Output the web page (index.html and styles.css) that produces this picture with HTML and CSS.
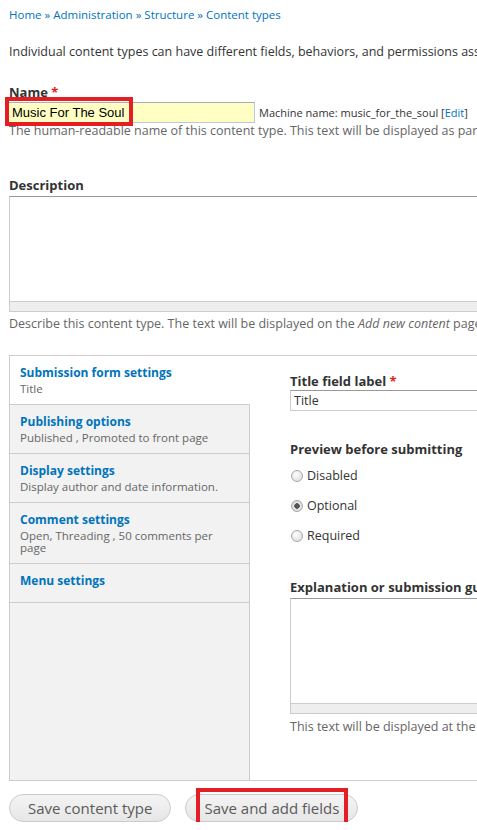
FILE: index.html
```html
<!DOCTYPE html>
<html lang="en">
<head>
  <meta charset="UTF-8" />
  <title>Content types</title>
  <link rel="stylesheet" href="styles.css">
</head>
<body>
  <div class="page">
    <div class="breadcrumb">
      <a href="#">Home</a> » <a href="#">Administration</a> » <a href="#">Structure</a> » <a href="#">Content types</a>
    </div>

    <p class="intro">Individual content types can have different fields, behaviors, and permissions assigned to them.</p>

    <div class="form-item name-item">
      <label for="name">Name <span class="req">*</span></label>
      <div class="name-row">
        <div class="mark-wrap">
          <input type="text" id="name" class="name-input" value="Music For The Soul" />
          <span class="mark mark-name"></span>
        </div>
        <span class="machine">Machine name: music_for_the_soul [<a href="#">Edit</a>]</span>
      </div>
      <div class="desc">The human-readable name of this content type. This text will be displayed as part of the list on the <em>Add new content</em> page.</div>
    </div>

    <div class="form-item descr-item">
      <label for="description">Description</label>
      <div class="textarea-wrap">
        <textarea id="description" class="big-text"></textarea>
        <div class="grip"></div>
      </div>
      <div class="desc">Describe this content type. The text will be displayed on the <em>Add new content</em> page.</div>
    </div>

    <div class="vertical-tabs">
      <ul class="tab-list">
        <li class="tab selected">
          <a href="#">Submission form settings</a>
          <span class="summary">Title</span>
        </li>
        <li class="tab">
          <a href="#">Publishing options</a>
          <span class="summary">Published , Promoted to front page</span>
        </li>
        <li class="tab">
          <a href="#">Display settings</a>
          <span class="summary">Display author and date information.</span>
        </li>
        <li class="tab">
          <a href="#">Comment settings</a>
          <span class="summary">Open, Threading , 50 comments per page</span>
        </li>
        <li class="tab menu-tab">
          <a href="#">Menu settings</a>
        </li>
      </ul>

      <div class="tab-pane">
        <div class="form-item">
          <label for="title_label">Title field label <span class="req">*</span></label>
          <input type="text" id="title_label" class="title-input" value="Title" />
        </div>

        <div class="form-item preview-item">
          <label>Preview before submitting</label>
          <div class="radios">
            <label class="radio"><input type="radio" name="preview" /> Disabled</label>
            <label class="radio"><input type="radio" name="preview" checked /> Optional</label>
            <label class="radio"><input type="radio" name="preview" /> Required</label>
          </div>
        </div>

        <div class="form-item help-item">
          <label for="help">Explanation or submission guidelines</label>
          <div class="textarea-wrap">
            <textarea id="help" class="help-text"></textarea>
            <div class="grip"></div>
          </div>
          <div class="desc">This text will be displayed at the top of the page when creating or editing content of this type.</div>
        </div>
      </div>
    </div>

    <div class="actions">
      <button type="button" class="btn">Save content type</button>
      <div class="mark-wrap">
        <button type="button" class="btn">Save and add fields</button>
        <span class="mark mark-btn"></span>
      </div>
    </div>
  </div>
</body>
</html>
```

FILE: styles.css
```css
html, body {
  overflow: hidden;
}

body {
  margin: 0;
  background: #fff;
  font-family: "Open Sans", Arial, sans-serif;
  font-size: 12.5px;
  color: #333;
}

.page {
  width: 860px;
  padding: 8px 0 0 9px;
}

a {
  color: #0074bd;
  text-decoration: none;
}

.breadcrumb {
  font-size: 11.5px;
  line-height: 14px;
  color: #0074bd;
}

.intro {
  margin: 22px 0 0;
  line-height: 16px;
  white-space: nowrap;
}

.form-item label {
  display: block;
  font-weight: bold;
  font-size: 13px;
  line-height: 16px;
  color: #333;
}

.req {
  color: #e3211b;
}

.desc {
  color: #666;
  line-height: 16px;
  white-space: nowrap;
}

/* name */
.name-item {
  margin-top: 24px;
}

.name-row {
  display: flex;
  align-items: center;
  margin-top: 2px;
}

.mark-wrap {
  position: relative;
}

.name-input {
  display: block;
  box-sizing: border-box;
  width: 247px;
  height: 21px;
  margin: 0 0 0 -1px;
  padding: 0 3px;
  border: 1px solid #b8c8dc;
  border-top-color: #aab;
  background: #ffffc4;
  font-family: "Liberation Sans", Arial, sans-serif;
  font-size: 13px;
  color: #000;
}

.machine {
  margin-left: 4px;
  font-size: 11px;
  color: #333;
}

.mark {
  position: absolute;
  border: 4px solid #e31e25;
  pointer-events: none;
}

.mark-name {
  left: -4px;
  top: -5px;
  width: 120px;
  height: 21px;
}

/* textareas */
.descr-item {
  margin-top: 38px;
}

.textarea-wrap {
  margin-top: 3px;
}

.textarea-wrap textarea {
  display: block;
  box-sizing: border-box;
  width: 780px;
  margin: 0;
  border: 1px solid #ccc;
  border-top-color: #999;
  border-bottom: 0;
  resize: none;
}

.big-text {
  height: 105px;
}

.grip {
  width: 780px;
  height: 11px;
  box-sizing: border-box;
  background: #eee;
  border: 1px solid #ccc;
}

.descr-item .desc {
  margin-top: 4px;
}

/* vertical tabs */
.vertical-tabs {
  display: flex;
  margin-top: 23px;
  border: 1px solid #ccc;
  border-right: 0;
  width: 770px;
}

.tab-list {
  list-style: none;
  margin: 0;
  padding: 0;
  width: 239px;
  flex-shrink: 0;
  background: #f2f2f2;
  border-right: 1px solid #ccc;
  min-height: 424px;
}

.tab {
  padding: 9px 10px 9px;
  border-bottom: 1px solid #ccc;
  line-height: 16px;
}

.tab.selected {
  background: #fff;
  margin-right: -1px;
  padding-right: 11px;
}

.tab a {
  display: block;
  font-weight: bold;
  font-size: 12px;
}

.summary {
  display: block;
  margin-top: 2px;
  font-size: 11.5px;
  color: #666;
  line-height: 12px;
}

.menu-tab {
  padding-bottom: 13px;
}

.tab-pane {
  flex: 1;
  padding: 17px 0 0 40px;
}

.title-input {
  display: block;
  box-sizing: border-box;
  width: 500px;
  height: 21px;
  margin: 1px 0 0;
  padding: 0 3px;
  border: 1px solid #ccc;
  border-top-color: #999;
  font-family: "Open Sans", Arial, sans-serif;
  font-size: 12.5px;
  color: #333;
}

.preview-item {
  margin-top: 30px;
}

.radios {
  margin-top: 4px;
}

.form-item .radio {
  display: flex;
  align-items: center;
  gap: 4px;
  font-weight: normal;
  font-size: 12.5px;
  height: 30px;
  color: #333;
}

.radio input {
  appearance: none;
  width: 12px;
  height: 12px;
  margin: 0 0 0 1px;
  border: 1px solid #a7a7a7;
  border-radius: 50%;
  background: radial-gradient(circle at 40% 35%, #fdfdfd, #d9d9d9);
}

.radio input:checked {
  background: radial-gradient(circle, #555 0 2.5px, #e6e6e6 3px, #d0d0d0);
}

.help-item {
  margin-top: 28px;
}

.help-text {
  height: 105px;
}

.help-item .desc {
  margin-top: 5px;
}

/* buttons */
.actions {
  display: flex;
  align-items: center;
  gap: 14px;
  margin-top: 13px;
}

.btn {
  height: 28px;
  padding: 0 18px;
  border: 1px solid #ccc;
  border-radius: 15px;
  background: linear-gradient(#f4f4f4, #e6e6e6);
  font-family: "Open Sans", Arial, sans-serif;
  font-size: 15px;
  color: #5a5a5a;
  cursor: pointer;
}

.mark-btn {
  left: 11px;
  top: -6px;
  right: 10px;
  bottom: -4px;
}
```
